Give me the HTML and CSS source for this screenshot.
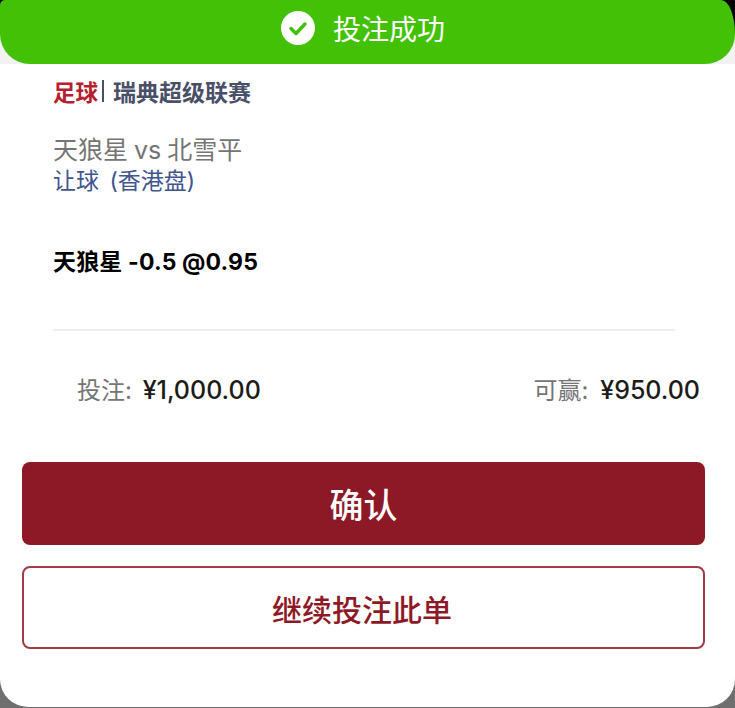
FILE: index.html
```html
<!DOCTYPE html>
<html lang="zh">
<head>
<meta charset="utf-8">
<title>投注成功</title>
<link rel="stylesheet" href="styles.css">
</head>
<body>
<div class="sheet">
  <div class="banner-wrap">
    <header class="banner">
      <svg class="check" width="34" height="34" viewBox="0 0 34 34"><circle cx="17" cy="17" r="17" fill="#fff"/><path d="M10 17.5l5 5 9-9.5" fill="none" stroke="#42c103" stroke-width="3.4" stroke-linecap="round" stroke-linejoin="round"/></svg>
      <span class="banner-text">投注成功</span>
    </header>
  </div>
  <section class="info">
    <div class="league"><span class="sport">足球</span><span class="sep"></span><span class="league-name">瑞典超级联赛</span></div>
    <div class="teams">天狼星 vs 北雪平</div>
    <div class="market">让球 (香港盘)</div>
    <div class="pick">天狼星 -0.5 @0.95</div>
    <div class="rule"></div>
  </section>
  <div class="amounts">
    <div><span class="label">投注: </span><span class="value value-stake">¥1,000.00</span></div>
    <div><span class="label">可赢: </span><span class="value value-win">¥950.00</span></div>
  </div>
  <div class="actions">
    <button class="btn primary">确认</button>
    <button class="btn secondary">继续投注此单</button>
  </div>
</div>
</body>
</html>
```
FILE: styles.css
```css
* { box-sizing: border-box; }
html, body { margin: 0; padding: 0; height: 708px; overflow: hidden; background: #6f6f6f; }
body { font-family: "Inter", "Noto Sans CJK SC", sans-serif; }
.sheet { width: 735px; height: 707px; background: #fff; border-radius: 0 0 28px 28px; display: flex; flex-direction: column; }
.banner-wrap { height: 64px; background: linear-gradient(#000 0, #000 34px, #f2f2f2 34px); }
.banner { height: 64px; background: #43c106; border-radius: 5px 14px 30px 30px / 5px 34px 30px 30px; display: flex; align-items: center; justify-content: center; gap: 18px; padding: 0 9px 8px 0; color: #fff; }
.banner-text { font-size: 28px; }
.info { padding: 0 60px 0 53px; }
.league { margin-top: 12px; height: 30px; display: flex; align-items: center; font-size: 22.5px; font-weight: 700; }
.sport { color: #b5202e; }
.sep { width: 2px; height: 22px; background: #4a4f68; margin: 0 9px 0 4px; }
.league-name { color: #4a4f68; font-size: 23px; }
.teams { margin-top: 28px; font-size: 25px; line-height: 32px; color: #757575; word-spacing: -1px; }
.market { margin-top: 1px; font-size: 23px; line-height: 28px; color: #42558f; word-spacing: 4px; }
.pick { margin-top: 52px; font-size: 23px; line-height: 30px; font-weight: 700; color: #000; letter-spacing: 0.15px; }
.rule { margin-top: 52px; height: 2px; background: #eeeeee; }
.amounts { margin-top: 43px; padding: 0 35px 0 77px; display: flex; justify-content: space-between; font-size: 24px; line-height: 32px; }
.label { color: #757575; }
.value { color: #1c1c1c; font-weight: 500; font-size: 25px; }
.value-stake { margin-left: 4px; }
.value-win { margin-left: 5px; }
.actions { margin-top: 55px; padding: 0 30px 0 22px; display: flex; flex-direction: column; gap: 21px; }
.btn { font-family: inherit; display: block; width: 100%; border-radius: 8px; }
.primary { height: 83px; background: #8e1926; border: none; color: #fff; font-size: 34px; font-weight: 500; }
.secondary { height: 83px; padding: 0 3px 0 0; background: #fff; border: 2px solid #a33a47; color: #8e1926; font-size: 30px; font-weight: 500; }
```
